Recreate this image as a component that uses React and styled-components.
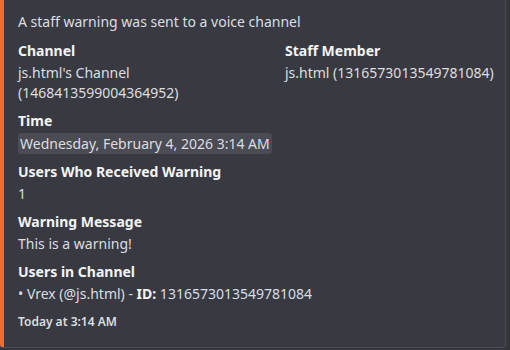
import styled, { createGlobalStyle } from "styled-components";

const GlobalStyle = createGlobalStyle`
  html, body {
    margin: 0;
    padding: 0;
    background: #34353b;
  }
  body {
    font-family: "Noto Sans", "Open Sans", "Liberation Sans", sans-serif;
    -webkit-font-smoothing: antialiased;
  }
`;

const Embed = styled.article`
  width: 506px;
  box-sizing: border-box;
  margin-top: -8px;
  height: 356px;
  background: #393a41;
  border: 1px solid #4b4c54;
  border-left: 4px solid #f26b2a;
  border-radius: 4px;
  padding: 19px 8px 16px 14px;
  display: flex;
  flex-direction: column;
`;

const Description = styled.div`
  font-size: 14px;
  line-height: 20px;
  color: #dbdee1;
  margin-bottom: 9px;
`;

const Fields = styled.div`
  display: grid;
  grid-template-columns: 259px 1fr;
  column-gap: 8px;
  row-gap: 8px;
`;

const Field = styled.div`
  grid-column: ${(p) => (p.$inline ? "auto" : "1 / -1")};
  min-width: 0;
`;

const FieldName = styled.div`
  font-size: 14px;
  font-weight: 700;
  line-height: 20px;
  color: #f2f3f5;
  margin-bottom: 2px;
`;

const FieldValue = styled.div`
  font-size: 14px;
  line-height: 20px;
  color: #dbdee1;
  white-space: ${(p) => (p.$nowrap ? "nowrap" : "normal")};
`;

const Timestamp = styled.span`
  display: inline-block;
  background: #4a4b53;
  border-radius: 3px;
  padding: 0 2px;
  line-height: 21px;
`;

const Strong = styled.strong`
  font-weight: 700;
  color: #f2f3f5;
`;

const Footer = styled.div`
  margin-top: 10px;
  font-size: 12px;
  font-weight: 600;
  line-height: 16px;
  color: #dbdee1;
`;

export default function App() {
  return (
    <>
      <GlobalStyle />
      <Embed>
        <Description>A staff warning was sent to a voice channel</Description>
        <Fields>
          <Field $inline>
            <FieldName>Channel</FieldName>
            <FieldValue>js.html's Channel (1468413599004364952)</FieldValue>
          </Field>
          <Field $inline>
            <FieldName>Staff Member</FieldName>
            <FieldValue $nowrap>js.html (1316573013549781084)</FieldValue>
          </Field>
          <Field>
            <FieldName>Time</FieldName>
            <FieldValue>
              <Timestamp>Wednesday, February 4, 2026 3:14 AM</Timestamp>
            </FieldValue>
          </Field>
          <Field>
            <FieldName>Users Who Received Warning</FieldName>
            <FieldValue>1</FieldValue>
          </Field>
          <Field>
            <FieldName>Warning Message</FieldName>
            <FieldValue>This is a warning!</FieldValue>
          </Field>
          <Field>
            <FieldName>Users in Channel</FieldName>
            <FieldValue>
              • Vrex (@js.html) - <Strong>ID:</Strong> 1316573013549781084
            </FieldValue>
          </Field>
        </Fields>
        <Footer>Today at 3:14 AM</Footer>
      </Embed>
    </>
  );
}
